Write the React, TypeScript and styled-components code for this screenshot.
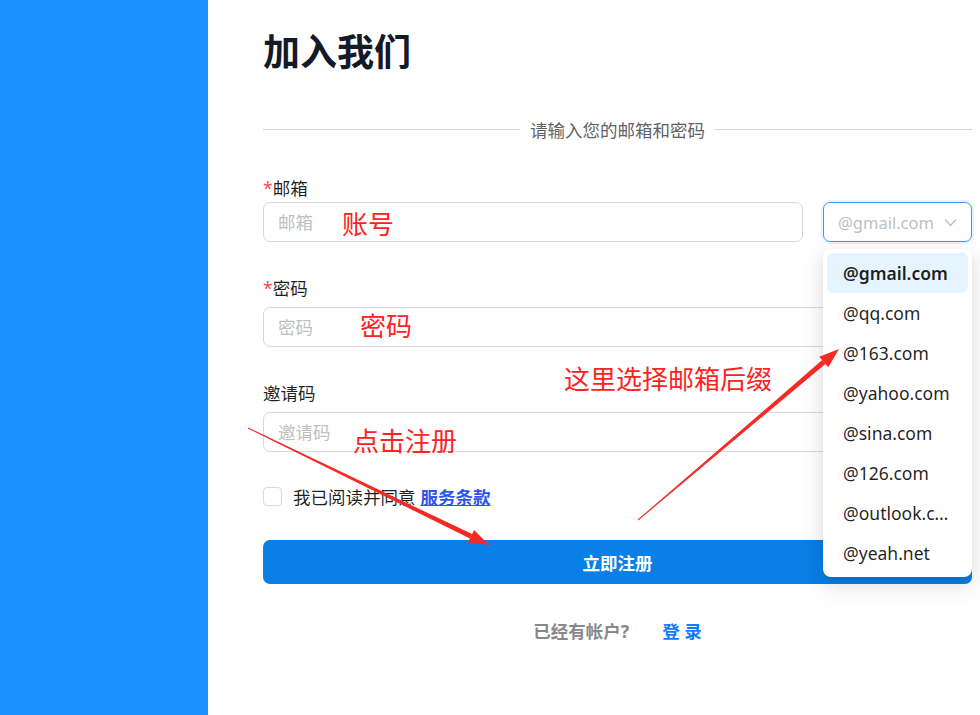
import styled, { createGlobalStyle } from 'styled-components';

const GlobalStyle = createGlobalStyle`
  html, body {
    margin: 0;
    padding: 0;
    background: #ffffff;
  }
  body {
    font-family: "Noto Sans", "Noto Sans CJK SC", sans-serif;
  }
  * {
    box-sizing: border-box;
  }
`;

const suffixes = [
  '@gmail.com',
  '@qq.com',
  '@163.com',
  '@yahoo.com',
  '@sina.com',
  '@126.com',
  '@outlook.com',
  '@yeah.net',
];

const notes = [
  { text: '账号', left: 342, top: 211 },
  { text: '密码', left: 360, top: 313 },
  { text: '这里选择邮箱后缀', left: 564, top: 366 },
  { text: '点击注册', left: 353, top: 428 },
];

const App = () => {
  return (
    <Page>
      <GlobalStyle />
      <Side />
      <Main>
        <Title>加入我们</Title>
        <Divider>
          <span>请输入您的邮箱和密码</span>
        </Divider>

        <Label $first>
          <Star>*</Star>邮箱
        </Label>
        <EmailRow>
          <Input placeholder="邮箱" />
          <SelectWrap>
            <SelectBox>
              <span>@gmail.com</span>
              <svg width="13" height="9" viewBox="0 0 13 9">
                <polyline points="1,1.5 6.5,7.5 12,1.5" fill="none" stroke="#bfbfbf" strokeWidth="1.3" />
              </svg>
            </SelectBox>
            <Dropdown>
              {suffixes.map((s, i) => (
                <Option key={s} $active={i === 0}>
                  {s}
                </Option>
              ))}
            </Dropdown>
          </SelectWrap>
        </EmailRow>

        <Label>
          <Star>*</Star>密码
        </Label>
        <Input type="password" placeholder="密码" />

        <Label>邀请码</Label>
        <Input placeholder="邀请码" />

        <AgreeRow>
          <Check />
          <span>我已阅读并同意</span>
          <Terms>服务条款</Terms>
        </AgreeRow>

        <Submit>立即注册</Submit>

        <LoginRow>
          <Muted>已经有帐户?</Muted>
          <LoginLink>登 录</LoginLink>
        </LoginRow>
      </Main>

      <Overlay>
        <svg width="980" height="715" viewBox="0 0 980 715">
          <polygon points="247.8,428.4 248.2,427.6 472.1,534.1 469.9,538.5" fill="#f42a23" />
          <polygon points="489,545 467.9,542.6 474.1,530" fill="#f42a23" />
          <polygon points="638.3,520.4 637.7,519.6 822.2,360.1 825.4,363.9" fill="#f42a23" />
          <polygon points="839,349 828.3,367.3 819.3,356.7" fill="#f42a23" />
        </svg>
        {notes.map((n) => (
          <Note key={n.text} style={{ left: n.left, top: n.top }}>
            {n.text}
          </Note>
        ))}
      </Overlay>
    </Page>
  );
};

export default App;

const Page = styled.div`
  position: relative;
  display: flex;
  width: 100%;
  height: 715px;
  overflow: hidden;
`;

const Side = styled.div`
  width: 208px;
  flex-shrink: 0;
  background-color: #1890ff;
`;

const Main = styled.div`
  flex: 1;
  display: flex;
  flex-direction: column;
  padding: 29px 8px 0 55px;
  font-size: 17.5px;
  color: rgba(0, 0, 0, 0.88);
`;

const Title = styled.h1`
  margin: 0;
  font-size: 37px;
  line-height: 46px;
  font-weight: 700;
  color: #141a26;
`;

const Divider = styled.div`
  display: flex;
  align-items: center;
  margin-top: 42px;
  height: 24px;
  font-size: 17.5px;
  color: #5f6368;
  &::before,
  &::after {
    content: '';
    flex: 1;
    border-top: 1px solid #d6d6d6;
  }
  & > span {
    padding: 0 10px;
  }
`;

const Label = styled.div<{ $first?: boolean }>`
  margin-top: ${(p) => (p.$first ? '35px' : '34px')};
  margin-bottom: ${(p) => (p.$first ? '2px' : '7px')};
  line-height: 24px;
`;

const Star = styled.span`
  color: #ff4d4f;
`;

const EmailRow = styled.div`
  display: flex;
  gap: 20px;
  & > input {
    flex: 1;
  }
`;

const Input = styled.input`
  flex: none;
  width: 100%;
  height: 40px;
  padding: 0 14px;
  border: 1px solid #d9d9d9;
  border-radius: 7px;
  font-family: inherit;
  font-size: 17.5px;
  color: rgba(0, 0, 0, 0.88);
  outline: none;
  &::placeholder {
    color: #bfbfbf;
  }
`;

const SelectWrap = styled.div`
  position: relative;
  width: 149px;
  flex-shrink: 0;
`;

const SelectBox = styled.div`
  display: flex;
  align-items: center;
  justify-content: space-between;
  height: 40px;
  padding: 0 14px 0 14px;
  border: 1px solid #4096ff;
  border-radius: 7px;
  box-shadow: 0 0 0 2px rgba(5, 145, 255, 0.1);
  color: #bfbfbf;
  font-size: 16.5px;
`;

const Dropdown = styled.div`
  position: absolute;
  top: 47px;
  left: 0;
  z-index: 5;
  width: 149px;
  padding: 4px;
  background: #ffffff;
  border-radius: 8px;
  box-shadow: 0 6px 16px 0 rgba(0, 0, 0, 0.08),
    0 3px 6px -4px rgba(0, 0, 0, 0.12), 0 9px 28px 8px rgba(0, 0, 0, 0.05);
`;

const Option = styled.div<{ $active?: boolean }>`
  height: 40px;
  line-height: 40px;
  padding: 0 10px 0 16px;
  border-radius: 6px;
  white-space: nowrap;
  overflow: hidden;
  text-overflow: ellipsis;
  font-size: 17.5px;
  color: rgba(0, 0, 0, 0.88);
  font-weight: ${(p) => (p.$active ? 600 : 400)};
  background: ${(p) => (p.$active ? '#e6f4ff' : 'transparent')};
`;

const AgreeRow = styled.div`
  display: flex;
  align-items: center;
  margin-top: 32px;
  height: 24px;
`;

const Check = styled.span`
  width: 19px;
  height: 19px;
  margin-right: 11px;
  border: 1px solid #d9d9d9;
  border-radius: 4px;
`;

const Terms = styled.a`
  margin-left: 5px;
  color: #2f54eb;
  font-weight: 700;
  text-decoration: underline;
`;

const Submit = styled.button`
  margin-top: 32px;
  height: 44px;
  border: none;
  border-radius: 7px;
  background: #0a7fe6;
  color: #ffffff;
  font-family: inherit;
  font-size: 17.5px;
  font-weight: 700;
`;

const LoginRow = styled.div`
  display: flex;
  justify-content: center;
  gap: 33px;
  margin-top: 35px;
  line-height: 24px;
  font-weight: 700;
`;

const Muted = styled.span`
  color: #888888;
`;

const LoginLink = styled.a`
  color: #1677ff;
`;

const Overlay = styled.div`
  position: absolute;
  inset: 0;
  z-index: 10;
  pointer-events: none;
  & > svg {
    position: absolute;
    left: 0;
    top: 0;
  }
`;

const Note = styled.span`
  position: absolute;
  font-size: 26px;
  line-height: 26px;
  color: #ff2222;
  white-space: nowrap;
`;
